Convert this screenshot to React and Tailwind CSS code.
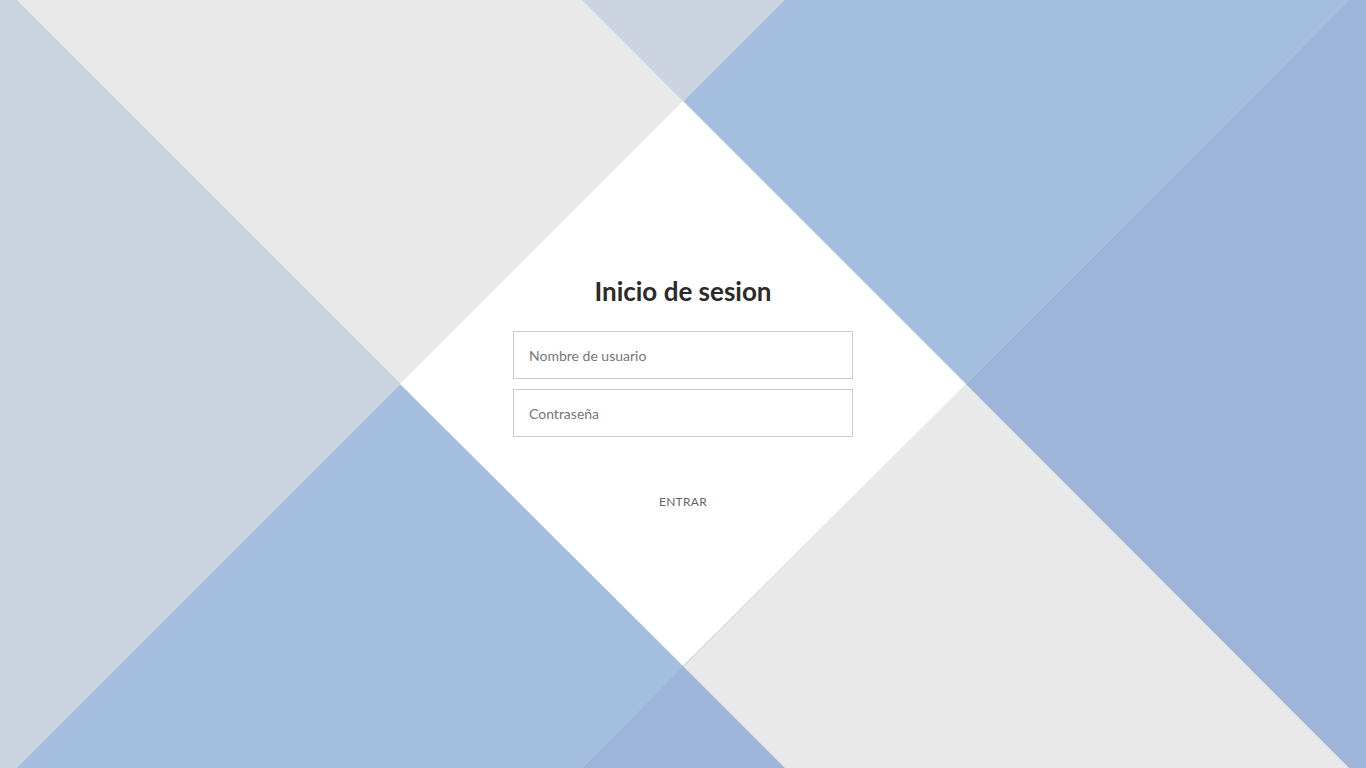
import React from 'react';

// Diagonal background: two crossing bands, white where they overlap
const Backdrop = () => (
    <svg className="absolute inset-0 h-full w-full" viewBox="0 0 1366 768" preserveAspectRatio="none">
        <rect width="1366" height="768" fill="#ccd3e1" />
        {/* right and bottom-center darker blue */}
        <polygon points="1349,0 1366,0 1366,768 1349,768 966,384" fill="#9db5d8" />
        <polygon points="582,768 683,666 785,768" fill="#9db5d8" />
        {/* band going down-right: light gray */}
        <polygon points="17,0 582,0 1349,768 785,768" fill="#e9e9e9" />
        {/* band going down-left: light blue */}
        <polygon points="785,0 1349,0 582,768 17,768" fill="#a4bee0" />
        {/* overlap */}
        <polygon points="683,101 966,384 683,666 400,384" fill="#ffffff" />
    </svg>
);

const App = () => {
    return (
        <div className="relative h-[768px] w-full overflow-hidden font-['Lato',sans-serif]">
            <Backdrop />
            <div className="relative flex h-full flex-col items-center pt-[275px]">
                <h1 className="text-[26px] font-bold leading-[32px] text-[#2b2b2b]">Inicio de sesion</h1>
                <form className="mt-[24px] flex w-[340px] flex-col gap-[10px]" onSubmit={(e) => e.preventDefault()}>
                    <input
                        type="text"
                        placeholder="Nombre de usuario"
                        className="h-[48px] w-full border border-[#cccccc] bg-white px-[15px] text-[14px] text-[#555] outline-none placeholder:text-[#777]"
                    />
                    <input
                        type="password"
                        placeholder="Contraseña"
                        className="h-[48px] w-full border border-[#cccccc] bg-white px-[15px] text-[14px] text-[#555] outline-none placeholder:text-[#777]"
                    />
                    <button type="submit" className="mx-auto mt-[46px] text-[12px] tracking-wide text-[#666]">
                        ENTRAR
                    </button>
                </form>
            </div>
        </div>
    );
};

export default App;
